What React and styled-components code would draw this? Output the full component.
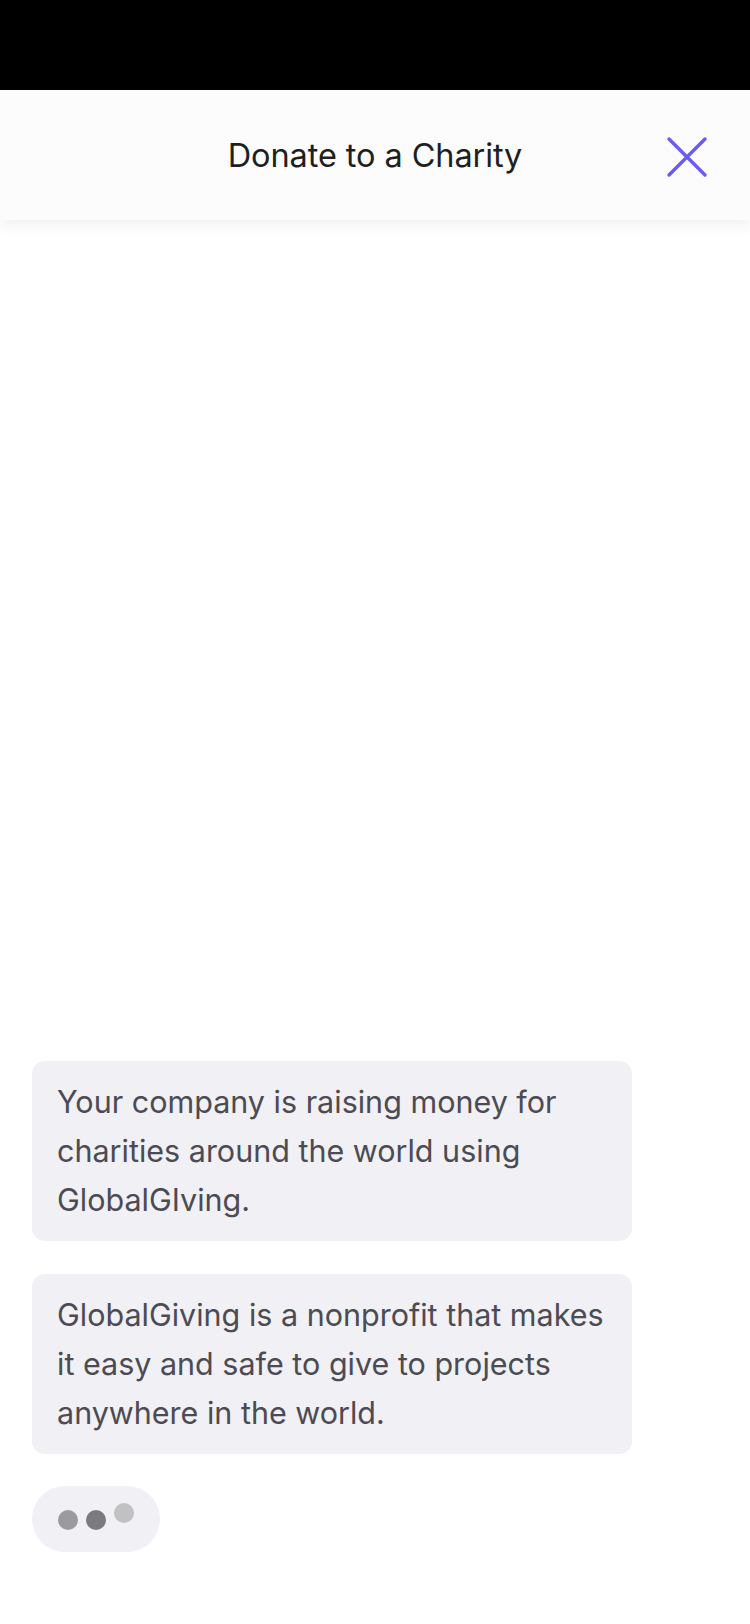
import React from "react";
import styled, { createGlobalStyle } from "styled-components";

const GlobalStyle = createGlobalStyle`
  html, body {
    margin: 0;
    padding: 0;
    background: #ffffff;
  }
  body {
    font-family: Inter, "Noto Sans", "Liberation Sans", sans-serif;
    -webkit-font-smoothing: antialiased;
  }
`;

const Screen = styled.div`
  width: 750px;
  height: 1624px;
  display: flex;
  flex-direction: column;
  background: #ffffff;
  overflow: hidden;
`;

const StatusBar = styled.div`
  height: 90px;
  flex-shrink: 0;
  background: #000000;
`;

const Header = styled.header`
  position: relative;
  z-index: 1;
  height: 130px;
  flex-shrink: 0;
  display: flex;
  align-items: center;
  justify-content: center;
  background: #fcfcfc;
  box-shadow: 0 6px 14px rgba(0, 0, 0, 0.06);
`;

const Title = styled.h1`
  margin: 0;
  font-size: 32.5px;
  font-weight: 400;
  color: #1f1f22;
  letter-spacing: -0.1px;
`;

const CloseButton = styled.button`
  position: absolute;
  right: 42px;
  top: 46px;
  width: 42px;
  height: 42px;
  padding: 0;
  border: none;
  background: transparent;
  display: flex;
  align-items: center;
  justify-content: center;
  cursor: pointer;
`;

const Chat = styled.main`
  flex: 1;
  display: flex;
  flex-direction: column;
  justify-content: flex-end;
  align-items: flex-start;
  gap: 33px;
  padding: 0 32px 72px;
`;

const Bubble = styled.div`
  width: 600px;
  box-sizing: border-box;
  padding: 16px 22px 17px 25px;
  background: #f0f0f5;
  border-radius: 13px;
  color: #4c4b53;
  font-size: 30.5px;
  line-height: 49px;
`;

const Typing = styled.div`
  width: 128px;
  height: 66px;
  border-radius: 33px;
  background: #f0f0f5;
  display: flex;
  align-items: center;
  justify-content: center;
  gap: 8px;
  margin-top: -1px;
`;

const Dot = styled.span`
  width: 20px;
  height: 20px;
  border-radius: 50%;
  background: ${(p) => p.$color};
  transform: translateY(${(p) => p.$lift}px);
`;

function CloseIcon() {
  return (
    <svg width="42" height="42" viewBox="0 0 42 42" fill="none">
      <path
        d="M3 3 L39 39 M39 3 L3 39"
        stroke="#6a5cf2"
        strokeWidth="3.4"
        strokeLinecap="round"
      />
    </svg>
  );
}

export default function App() {
  return (
    <>
      <GlobalStyle />
      <Screen>
        <StatusBar />
        <Header>
          <Title>Donate to a Charity</Title>
          <CloseButton aria-label="Close">
            <CloseIcon />
          </CloseButton>
        </Header>
        <Chat>
          <Bubble>
            Your company is raising money for charities around the world using
            GlobalGIving.
          </Bubble>
          <Bubble>
            GlobalGiving is a nonprofit that makes it easy and safe to give to
            projects anywhere in the world.
          </Bubble>
          <Typing>
            <Dot $color="#9b9b9e" $lift={1} />
            <Dot $color="#7b7b7e" $lift={1} />
            <Dot $color="#c1c1c4" $lift={-6} />
          </Typing>
        </Chat>
      </Screen>
    </>
  );
}
